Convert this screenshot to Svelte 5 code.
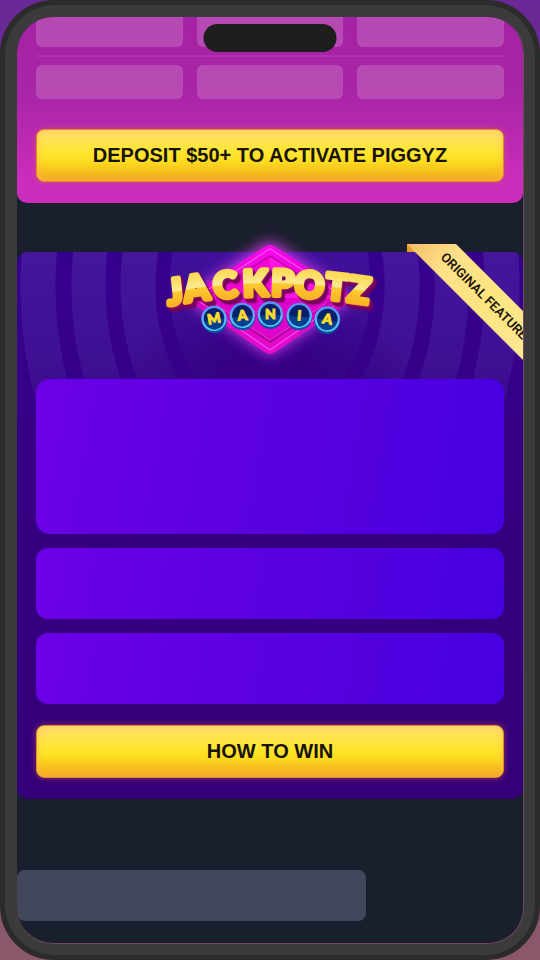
<script lang="ts">
  const slots = [1, 2, 3];
  const panels = ['large', 'small', 'small'];

  const word = [
    { letter: 'J', x: 78, y: 223, tilt: -6 },
    { letter: 'A', x: 143, y: 212, tilt: -8 },
    { letter: 'C', x: 229, y: 203, tilt: -5 },
    { letter: 'K', x: 317, y: 198, tilt: -2 },
    { letter: 'P', x: 397, y: 198, tilt: 2 },
    { letter: 'O', x: 476, y: 203, tilt: 4 },
    { letter: 'T', x: 556, y: 210, tilt: 6 },
    { letter: 'Z', x: 622, y: 218, tilt: 8 },
  ];

  const coins = [
    { letter: 'M', x: 192, y: 265, tilt: -10 },
    { letter: 'A', x: 277, y: 256, tilt: -5 },
    { letter: 'N', x: 361, y: 252, tilt: 0 },
    { letter: 'I', x: 448, y: 256, tilt: 5 },
    { letter: 'A', x: 532, y: 267, tilt: 10 },
  ];
</script>

<div class="phone">
  <div class="bezel">
    <span class="notch"></span>
    <main class="screen">
      <section class="piggyz">
        <div class="slots cut">
          {#each slots as slot (slot)}
            <div class="slot"></div>
          {/each}
        </div>
        <div class="divider"></div>
        <div class="slots">
          {#each slots as slot (slot)}
            <div class="slot"></div>
          {/each}
        </div>
        <button class="cta">DEPOSIT $50+ TO ACTIVATE PIGGYZ</button>
      </section>

      <section class="jackpotz">
        <svg class="logo" viewBox="0 0 720 420" role="img" aria-label="Jackpotz Mania">
          <defs>
            <linearGradient id="gold" gradientUnits="userSpaceOnUse" x1="0" y1="-84" x2="0" y2="6">
              <stop offset="0" stop-color="#fbd84c" />
              <stop offset="0.48" stop-color="#fdea92" />
              <stop offset="0.54" stop-color="#fcc930" />
              <stop offset="1" stop-color="#f9b222" />
            </linearGradient>
            <linearGradient id="gem" x1="0" y1="0" x2="0" y2="1">
              <stop offset="0" stop-color="#fb08f0" />
              <stop offset="0.5" stop-color="#d504c0" />
              <stop offset="1" stop-color="#e80bd2" />
            </linearGradient>
            <linearGradient id="coin" x1="0" y1="0" x2="0" y2="1">
              <stop offset="0" stop-color="#5590f5" />
              <stop offset="1" stop-color="#5cd2f5" />
            </linearGradient>
            <filter id="glow" x="-40%" y="-40%" width="180%" height="180%">
              <feGaussianBlur stdDeviation="22" />
            </filter>
          </defs>
          <path d="M360 34 L592 190 Q604 203 592 216 L360 376 L128 216 Q116 203 128 190 Z" fill="#e03cf5" filter="url(#glow)" />
          <path d="M345 50 Q360 40 375 50 L598 194 Q612 205 598 216 L374 367 Q360 377 346 367 L122 216 Q108 205 122 194 Z" fill="url(#gem)" />
          <path d="M360 56 L586 205 L360 360 L134 205 Z" fill="none" stroke="#ff67f5" stroke-width="3" />
          <path d="M360 76 L560 205 L360 340 L160 205 Z" fill="#b4009e" />
          <path d="M360 80 L552 205 L360 328 L168 205 Z" fill="#f005d5" />
          <path d="M360 80 L552 205 L360 205 Z" fill="#fb16e6" />
          <path d="M360 205 L552 205 L360 328 L168 205 Z" fill="#df02ca" />
          <path d="M190 219 L360 330 L530 219" fill="none" stroke="#ff5cf0" stroke-width="2" />
          <g class="word">
            {#each word as item (item.letter)}
              <text transform="translate({item.x} {item.y}) rotate({item.tilt})">{item.letter}</text>
            {/each}
          </g>
          {#each coins as coin (coin.x)}
            <g transform="translate({coin.x} {coin.y}) rotate({coin.tilt})">
              <circle cy="7" r="38" fill="#0750a5" />
              <circle r="38" fill="url(#coin)" />
              <circle r="31" fill="#06206b" />
              <path d="M-30 4 A30 30 0 0 0 30 4 Z" fill="#073f91" />
              <text class="coin-letter" y="15">{coin.letter}</text>
            </g>
          {/each}
        </svg>

        <svg class="ribbon" viewBox="0 0 116 116" role="img" aria-label="Original feature">
          <defs>
            <linearGradient id="sash" x1="0" y1="0" x2="1" y2="1">
              <stop offset="0" stop-color="#f3bd64" />
              <stop offset="0.25" stop-color="#ffe08a" />
              <stop offset="0.6" stop-color="#fde580" />
              <stop offset="1" stop-color="#fde795" />
            </linearGradient>
          </defs>
          <path d="M0 0 H9 V8 H0 Z" fill="#e89b2c" />
          <path d="M0 0 H49 L116 67 V116 Z" fill="url(#sash)" />
          <text class="ribbon-text" transform="translate(33 14) rotate(45)">ORIGINAL FEATURE</text>
        </svg>

        {#each panels as size}
          <div class="panel {size}"></div>
        {/each}
        <button class="cta">HOW TO WIN</button>
      </section>

      <div class="next-title"></div>
    </main>
  </div>
</div>

<style>
  :global(body) {
    background: linear-gradient(#6a2796, #8c586b);
    font-family: 'Liberation Sans', Arial, sans-serif;
  }

  .phone {
    display: flex;
    box-sizing: border-box;
    min-height: 100vh;
    border: 5px solid #2b2b2c;
    border-radius: 54px;
    background: #2b2b2c;
  }

  .bezel {
    position: relative;
    display: flex;
    flex: 1;
    padding: 12px 11px 11px 12px;
    border-radius: 50px;
    background: #3b3b3c;
  }

  .notch {
    position: absolute;
    z-index: 2;
    top: 19px;
    left: 50%;
    width: 133px;
    height: 28px;
    border-radius: 14px;
    background: #1e1e1e;
    transform: translateX(-50%);
  }

  .screen {
    flex: 1;
    min-width: 0;
    overflow: hidden;
    border-right: 1px solid #704860;
    border-bottom: 1px solid #704860;
    border-radius: 36px;
    background: #191f2c;
  }

  .piggyz {
    padding: 0 19px 21px;
    border-radius: 0 0 10px 10px;
    background: linear-gradient(#a422a3, #a825a6 40%, #cb2dbc 88%, #ca2dbc);
  }

  .slots {
    display: grid;
    grid-template-columns: repeat(3, 1fr);
    gap: 14px;
  }

  .slot {
    height: 34px;
    border-radius: 6px;
    background: rgba(213, 140, 205, 0.36);
  }

  .cut .slot {
    height: 30px;
    border-radius: 0 0 6px 6px;
  }

  .divider {
    height: 2px;
    margin: 8px 0;
    background: rgba(255, 120, 240, 0.14);
  }

  .cta {
    display: block;
    width: 100%;
    height: 53px;
    padding: 0 0 2px;
    border: 1px solid #e08a2c;
    border-radius: 8px;
    background: linear-gradient(#ffe170, #ffe62e 45%, #fddc20 62%, #f2a51c);
    box-shadow: inset 0 0 8px rgba(255, 185, 90, 0.7), 0 0 6px rgba(240, 100, 60, 0.5);
    color: #17130c;
    font: bold 20px/24px 'Liberation Sans', Arial, sans-serif;
    cursor: pointer;
  }

  .piggyz .cta {
    margin-top: 30px;
  }

  .jackpotz {
    position: relative;
    display: flex;
    flex-direction: column;
    gap: 14px;
    margin-top: 49px;
    padding: 0 19px 21px;
    border-radius: 10px;
    background:
      radial-gradient(150px 90px at 50% 130px, #350085 30%, rgba(53, 0, 133, 0)),
      linear-gradient(rgba(53, 0, 128, 0), rgba(53, 0, 128, 0.3) 110px, #350080 270px, #330078),
      radial-gradient(
        260px 348px at 50% 34px,
        #3f1099 100px,
        #36008e 101px 114px,
        #43169c 115px 149px,
        #36008e 150px 164px,
        #43169c 165px 198px,
        #36008e 199px 214px,
        #43169c 215px 249px,
        #36008e 250px
      );
  }

  .logo {
    align-self: center;
    width: 240px;
    height: 140px;
    margin: -22px 0 -5px;
    overflow: visible;
  }

  .word {
    filter: drop-shadow(3px 4px 0 #8a0868) drop-shadow(4px 5px 0 #74045a) drop-shadow(3px 4px 0 #74045a);
  }

  .word text {
    fill: url(#gold);
    stroke: url(#gold);
    stroke-width: 14px;
    stroke-linejoin: round;
    font: 900 108px Lato, sans-serif;
    text-anchor: middle;
  }

  .coin-letter {
    fill: #fbdc2e;
    stroke: #fbdc2e;
    stroke-width: 3px;
    font: 900 42px Lato, sans-serif;
    text-anchor: middle;
  }

  .ribbon {
    position: absolute;
    top: -8px;
    right: 0;
    width: 116px;
    height: 116px;
  }

  .ribbon-text {
    fill: #1c1408;
    font: 600 13px Roboto, sans-serif;
  }

  .panel {
    height: 71px;
    border-radius: 12px;
    background: linear-gradient(100deg, #6d00e6, #5800e0 55%, #4700e0);
  }

  .panel.large {
    height: 155px;
    border-radius: 14px;
  }

  .jackpotz .cta {
    margin-top: 7px;
  }

  .next-title {
    width: 69%;
    height: 51px;
    margin: 71px 0 22px;
    border-radius: 8px;
    background: #41465a;
  }
</style>
